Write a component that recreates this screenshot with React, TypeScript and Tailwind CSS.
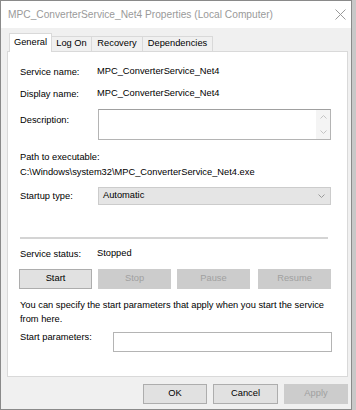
import React from "react";

const font = { fontFamily: '"Liberation Sans", Arial, sans-serif' };

const Label: React.FC<{ children: React.ReactNode; className?: string }> = ({ children, className = "" }) => (
  <div className={`w-[77px] shrink-0 leading-[14px] ${className}`}>{children}</div>
);

const SvcButton: React.FC<{ label: string; disabled?: boolean; className?: string }> = ({ label, disabled, className = "" }) => (
  <div
    className={`w-[73px] h-[20px] flex items-center justify-center border ${
      disabled ? "bg-[#cccccc] border-[#cccccc] text-[#a0a0a0]" : "bg-[#e1e1e1] border-[#adadad] text-black"
    } ${className}`}
  >
    {label}
  </div>
);

const Tab: React.FC<{ label: string; active?: boolean; className?: string }> = ({ label, active, className = "" }) =>
  active ? (
    <div className={`h-[19px] flex items-center justify-center bg-white border border-b-0 border-[#d9d9d9] relative z-10 ${className}`}>
      {label}
    </div>
  ) : (
    <div className={`h-[15px] mt-[3px] flex items-center justify-center bg-[#f0f0f0] border border-b-0 border-[#d9d9d9] border-l-0 ${className}`}>
      {label}
    </div>
  );

export default function App() {
  return (
    <div className="w-[356px] h-[410px] bg-[#c8c8c8] overflow-hidden text-[9.3px] text-black" style={font}>
      <div className="w-[352px] h-[410px] border border-[#8a8a8a] bg-[#f0f0f0] flex flex-col">
        {/* Title bar */}
        <div className="h-[27px] bg-white flex items-center justify-between pl-[7px] pr-[5px]">
          <span className="text-[10.2px] text-[#9a9a9a]">MPC_ConverterService_Net4 Properties (Local Computer)</span>
          <svg width="11" height="11" viewBox="0 0 11 11">
            <path d="M0.5 0.5 L10.5 10.5 M10.5 0.5 L0.5 10.5" stroke="#9a9a9a" strokeWidth="1" fill="none" />
          </svg>
        </div>

        {/* Tabs */}
        <div className="flex items-start h-[19px] mt-[5px] ml-[8px]">
          <Tab label="General" active className="w-[43px]" />
          <Tab label="Log On" className="w-[40px]" />
          <Tab label="Recovery" className="w-[51px]" />
          <Tab label="Dependencies" className="w-[70px]" />
        </div>

        {/* Panel */}
        <div className="ml-[6px] w-[341px] h-[326px] -mt-[1px] bg-white border border-[#d9d9d9] pl-[12px] pt-[13px] flex flex-col">
          <div className="flex h-[14px] items-center">
            <Label>Service name:</Label>
            <span>MPC_ConverterService_Net4</span>
          </div>
          <div className="flex h-[14px] items-center mt-[8px]">
            <Label>Display name:</Label>
            <span>MPC_ConverterService_Net4</span>
          </div>
          <div className="flex mt-[8px]">
            <Label className="mt-[4px]">Description:</Label>
            <div className="w-[233px] h-[31px] border border-[#b4b4b4] border-t-[#a0a0a0] ml-[1px] flex justify-end">
              <div className="w-[14px] h-full bg-[#f4f4f4] flex flex-col items-center justify-between py-[5px]">
                <svg width="7" height="4" viewBox="0 0 7 4">
                  <path d="M0.5 3.5 L3.5 0.5 L6.5 3.5" stroke="#c4c4c4" fill="none" />
                </svg>
                <svg width="7" height="4" viewBox="0 0 7 4">
                  <path d="M0.5 0.5 L3.5 3.5 L6.5 0.5" stroke="#c4c4c4" fill="none" />
                </svg>
              </div>
            </div>
          </div>
          <div className="h-[14px] leading-[14px] mt-[10px]">Path to executable:</div>
          <div className="h-[14px] leading-[14px] mt-[1px]">C:\Windows\system32\MPC_ConverterService_Net4.exe</div>
          <div className="flex items-center mt-[8px]">
            <Label>Startup type:</Label>
            <div className="w-[233px] h-[18px] ml-[1px] bg-[#e5e5e5] border border-[#cccccc] flex items-center justify-between pl-[4px] pr-[5px]">
              <span>Automatic</span>
              <svg width="7" height="4" viewBox="0 0 7 4">
                <path d="M0.5 0.5 L3.5 3.5 L6.5 0.5" stroke="#9a9a9a" fill="none" />
              </svg>
            </div>
          </div>
          <div className="w-[308px] h-[2px] bg-[#d4d4d4] mt-[32px]" />
          <div className="flex h-[14px] items-center mt-[8px]">
            <Label>Service status:</Label>
            <span>Stopped</span>
          </div>
          <div className="flex mt-[8px] -ml-[1px]">
            <SvcButton label="Start" />
            <SvcButton label="Stop" disabled className="ml-[6px]" />
            <SvcButton label="Pause" disabled className="ml-[6px]" />
            <SvcButton label="Resume" disabled className="ml-[8px]" />
          </div>
          <div className="leading-[14px] mt-[9px] w-[315px]">
            You can specify the start parameters that apply when you start the service from here.
          </div>
          <div className="flex items-start mt-[4px]">
            <div className="w-[93px] shrink-0 leading-[14px]">Start parameters:</div>
            <div className="w-[219px] h-[20px] mt-[2px] border border-[#b4b4b4]" />
          </div>
        </div>

        {/* Bottom buttons */}
        <div className="flex justify-end mt-[7px] pr-[3px]">
          <div className="w-[64px] h-[20px] bg-[#e1e1e1] border border-[#adadad] flex items-center justify-center">OK</div>
          <div className="w-[65px] h-[20px] ml-[6px] bg-[#e1e1e1] border border-[#adadad] flex items-center justify-center">Cancel</div>
          <div className="w-[64px] h-[20px] ml-[6px] bg-[#cccccc] border border-[#cccccc] text-[#a0a0a0] flex items-center justify-center">Apply</div>
        </div>
      </div>
    </div>
  );
}
